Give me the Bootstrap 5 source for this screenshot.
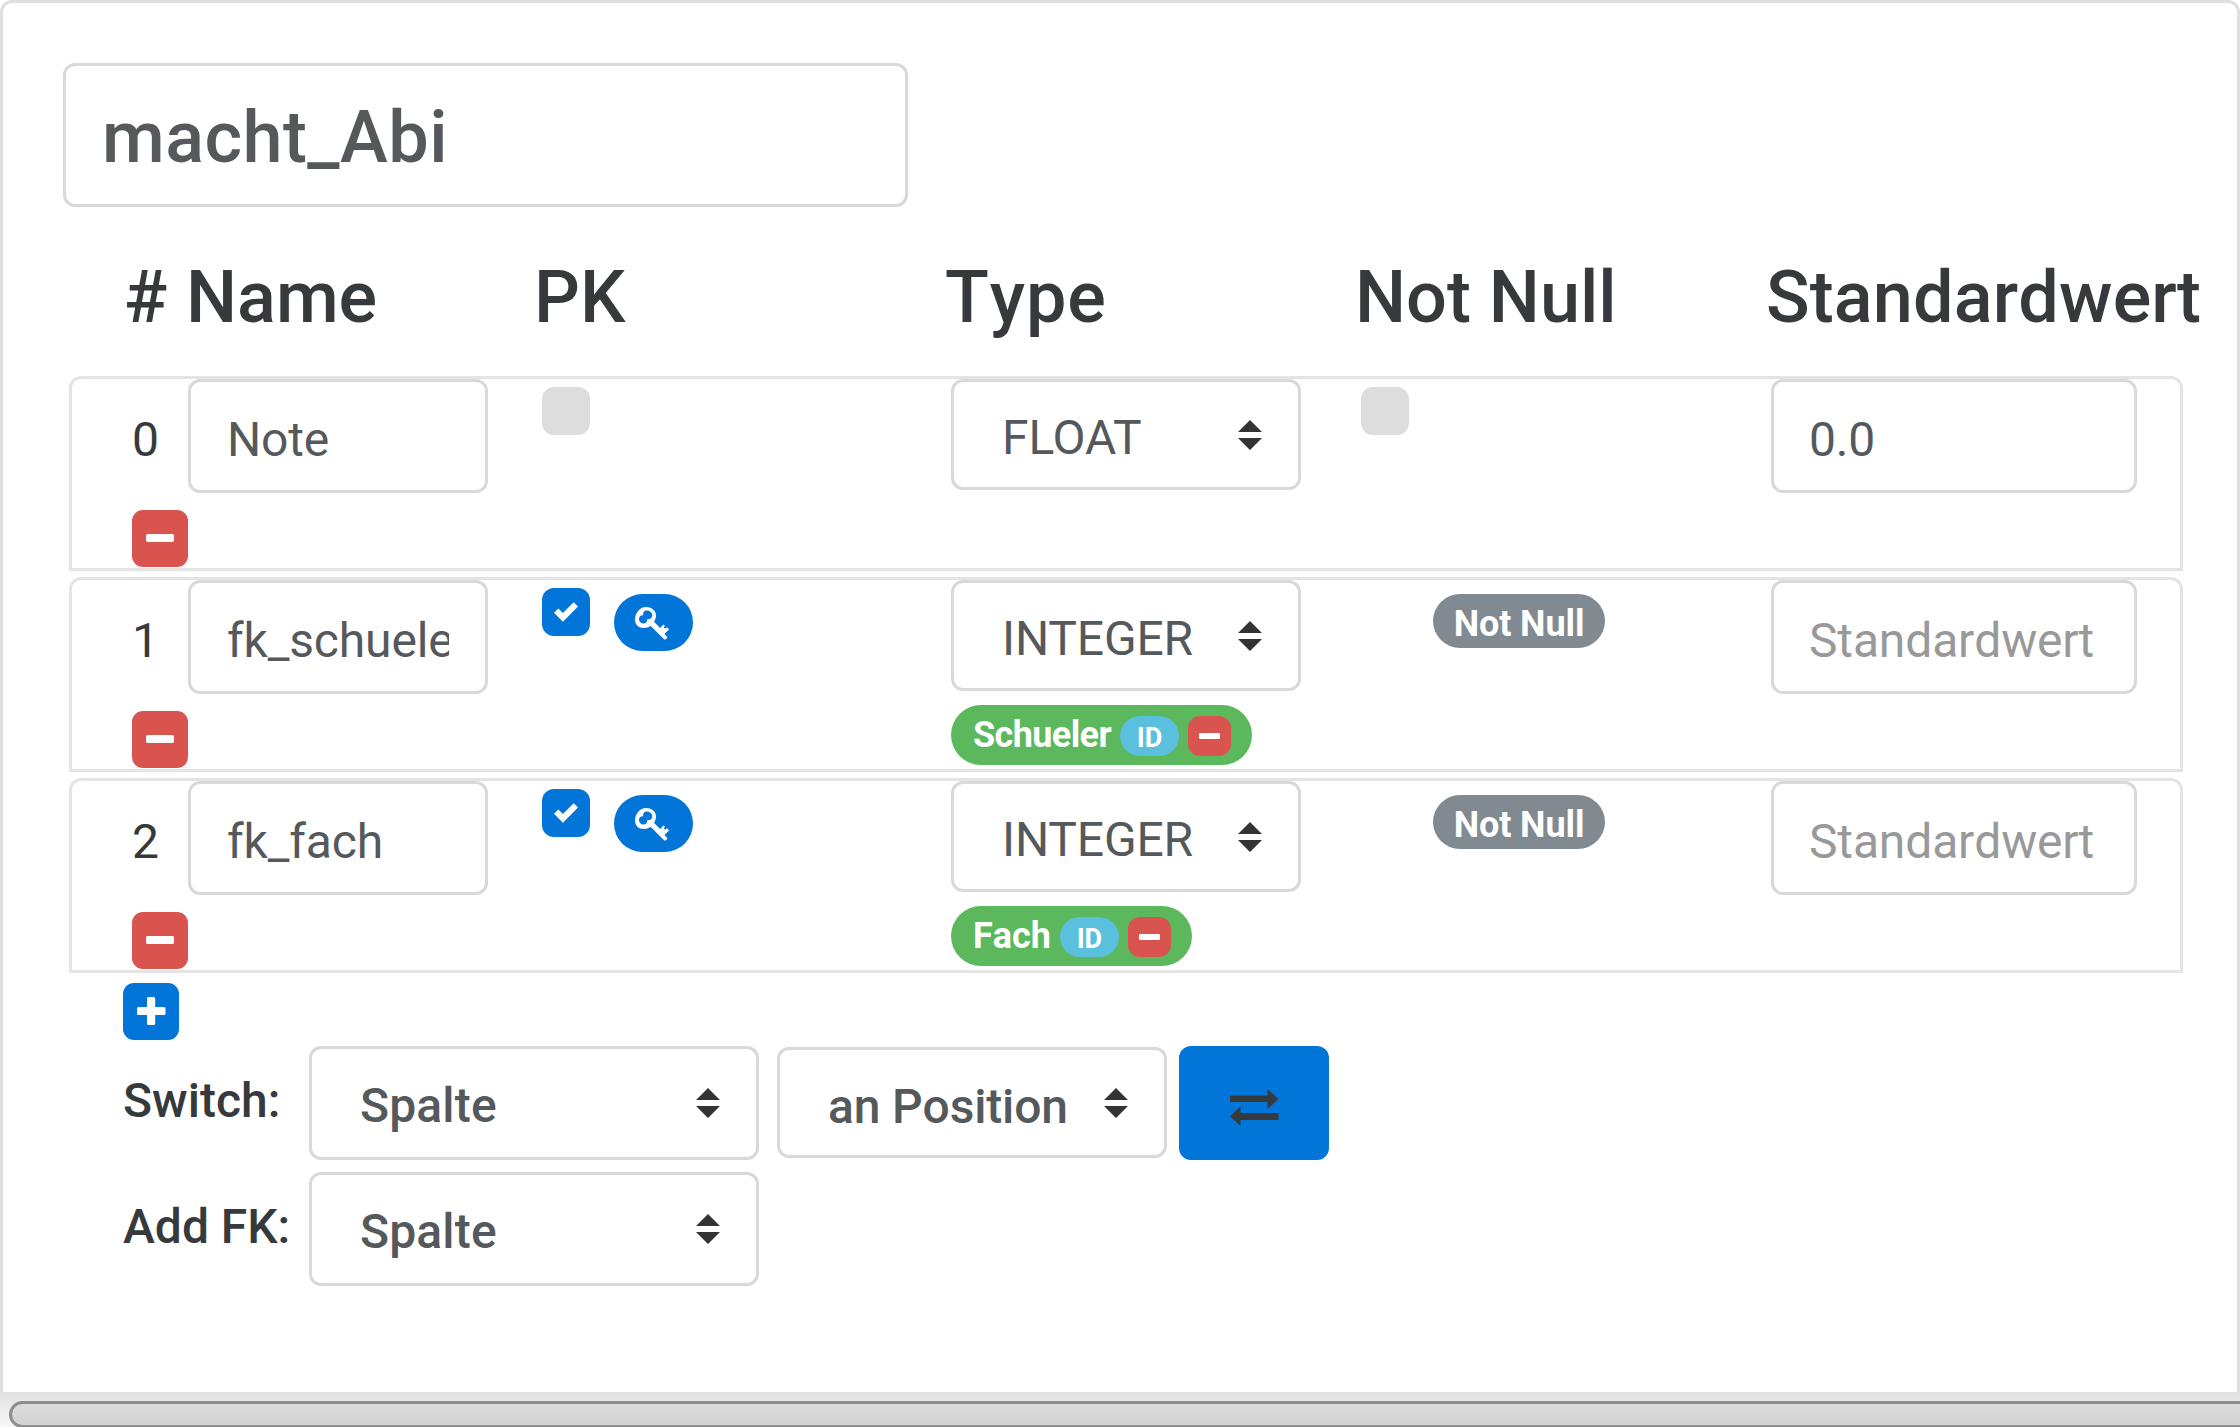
<!DOCTYPE html>
<html lang="de">
<head>
<meta charset="utf-8">
<meta name="viewport" content="width=device-width, initial-scale=1">
<title>macht_Abi</title>
<link rel="stylesheet" href="https://cdn.jsdelivr.net/npm/bootstrap@5.3.0/dist/css/bootstrap.min.css">
<style>
html{font-size:48px}
body{font-family:Roboto,sans-serif;font-kerning:none;color:#373a3c;background:#fff;height:1427px;overflow:hidden}
.editor{height:1392px;border:3px solid #dfdfdf;border-bottom:0;border-radius:12px 12px 0 0;padding:60px 0 0 60px}
.form-control,.form-select{border:3px solid #d9d9d9;border-radius:12px;color:#55595c;font-size:48px;line-height:72px;background-color:#fff;font-kerning:none}
.form-control{height:114px;padding:21px 36px 15px 35px;letter-spacing:-.15px}
.form-control::placeholder{color:#999}
.title-input{width:845px;height:144px;padding:29px 36px 25px;font-size:72px;font-weight:500;line-height:84px;letter-spacing:.45px}
.form-select{height:111px;padding:20px 60px 13px 48px;background-size:24px 30px;background-position:right 36px top 38px;
background-image:url("data:image/svg+xml,%3csvg xmlns='http://www.w3.org/2000/svg' viewBox='0 0 24 30'%3e%3cpath fill='%23333' d='M12 0 24 12H0zM0 18h24L12 30z'/%3e%3c/svg%3e")}
.heads{display:grid;grid-template-columns:62px 348px 411px 410px 411px 1fr;margin:51px 0 0 61px;font-size:72px;font-weight:500;line-height:80px;height:118px;white-space:nowrap}
.heads span:nth-child(4){letter-spacing:.9px}
.heads span:last-child{letter-spacing:.15px}
.line{display:grid;grid-template-columns:56px 354px 409px 410px 410px 366px;grid-template-rows:128px 61px;width:2114px;height:195px;margin:0 0 6px 6px;padding-left:60px;border:3px solid #e4e4e4;border-radius:12px 12px 0 0}
.num{padding:25px 0 0 0;line-height:72px}
.name-input{width:300px;padding-left:36px}
.type-select{width:350px;font-kerning:normal;letter-spacing:-.15px}
.box{width:48px;height:48px;border-radius:12px;background:#ddd;margin-top:8px}
.box.on{background:#0275d8;padding:12px}
.box svg,.sq svg,.keytag svg,.swap svg{display:block}
.sq{width:56px;height:57px;border-radius:11px;border:0;padding:13px 14px 15px}
.line>.sq{margin-top:3px}
.red{background:#d9534f}.blue{background:#0275d8}
.keytag{width:79px;height:57px;border-radius:29px;margin:14px 0 0 24px;padding:13px 0 0 21px;background:#0275d8}
.nn{width:172px;height:54px;border-radius:27px;margin:14px 0 0 72px;background:#818a91;font-size:36px;font-weight:700;line-height:60px;padding:0;letter-spacing:-.1px}
.fk{height:60px;border-radius:30px;background:#5cb85c;color:#fff;font-size:36px;font-weight:700;line-height:60px;margin-top:14px;padding:0 21px 0 22px;width:max-content}
.fk-long{letter-spacing:-.6px}
.idtag{width:59px;height:40px;border-radius:20px;background:#5bc0de;font-size:27px;line-height:44px;text-align:center;margin:1px 9px 0 9px;letter-spacing:0}
.mini{width:43px;height:40px;border-radius:12px;padding:17px 11px;margin-top:1px}
.mini svg{display:block}
.tools{padding:4px 0 0 60px}
.tools .form-select{font-weight:500}
.tag{width:186px;font-weight:500;line-height:72px;padding-top:19px;white-space:nowrap}
.tools .wide{width:450px;height:114px;padding-top:21px;padding-bottom:15px;background-position:right 36px top 39px;letter-spacing:.15px}
.pos{width:390px;margin:1px 12px 0 18px}
.tools .pos{padding-top:21px;letter-spacing:-.15px}
.swap{width:150px;height:114px;border:0;border-radius:12px;padding:9px 0 0 51px}
.track{height:35px;overflow:hidden;background:linear-gradient(#e1e1e1,#f8f8f8);padding:9px 0 0 9px}
.thumb{height:27px;margin-right:-30px;border:3px solid #8e8e8e;border-radius:14px;background:linear-gradient(#ddd,#d2d2d2)}
</style>
</head>
<body>
<svg class="d-none">
<symbol id="minus" viewBox="0 0 28 8"><rect width="28" height="8" rx="1.7" fill="#fff"/></symbol>
<symbol id="check" viewBox="0 0 8 8"><path fill="#fff" d="M6.564.75l-3.59 3.612-1.538-1.55L0 4.26 2.974 7.25 8 2.193z"/></symbol>
<symbol id="key" viewBox="0 0 34 33"><path fill="#fff" fill-rule="evenodd" d="M11 0C16 0 21 3 21 8.500c0 2.500-1 4.700-2 6.300l6.200 6.200 3-3.200c.6-.6 2.100.9 1.500 1.500l-1 1 1.500 1.500 1.200-1.200c.8-.7 3 1.500 2.300 2.200l-4.300 4.300 2.700 2.700c1 1-1.800 3.600-2.800 2.600L15.800 19C13.500 20.300 11.500 21 9 21 3.500 21 0 17.500 0 12.500 0 6 5 0 11 0zM11.500 3.500C9 3.500 7.700 5.600 8.200 8.200 5.500 8 3.700 10 4 12.600 4.200 15 6.500 17 9.200 16.500c2-.4 3.200-1.900 3-4.300 3 .3 5-1.300 5-4 0-2.800-2.500-4.700-5.700-4.700z"/></symbol>
</svg>
<main class="editor">
  <input class="form-control title-input" value="macht_Abi" aria-label="Tabelle">
  <div class="heads"><span>#</span><span>Name</span><span>PK</span><span>Type</span><span>Not Null</span><span>Standardwert</span></div>

  <div class="line">
    <div class="num">0</div>
    <div><input class="form-control name-input" value="Note"></div>
    <div><div class="box"></div></div>
    <div><select class="form-select type-select"><option>FLOAT</option></select></div>
    <div><div class="box"></div></div>
    <div><input class="form-control" value="0.0"></div>
    <button class="sq red"><svg width="28" height="28"><use href="#minus" width="28" height="8" y="10"/></svg></button>
  </div>

  <div class="line">
    <div class="num">1</div>
    <div><input class="form-control name-input" value="fk_schueler"></div>
    <div class="d-flex align-items-start"><div class="box on"><svg width="24" height="24"><use href="#check"/></svg></div><span class="keytag"><svg width="34" height="33"><use href="#key"/></svg></span></div>
    <div><select class="form-select type-select"><option>INTEGER</option></select>
      <div class="fk fk-long d-flex align-items-center"><span>Schueler</span><span class="idtag">ID</span><span class="mini red"><svg width="21" height="6"><use href="#minus"/></svg></span></div></div>
    <div><span class="badge nn d-block">Not Null</span></div>
    <div><input class="form-control" placeholder="Standardwert"></div>
    <button class="sq red"><svg width="28" height="28"><use href="#minus" width="28" height="8" y="10"/></svg></button>
  </div>

  <div class="line">
    <div class="num">2</div>
    <div><input class="form-control name-input" value="fk_fach"></div>
    <div class="d-flex align-items-start"><div class="box on"><svg width="24" height="24"><use href="#check"/></svg></div><span class="keytag"><svg width="34" height="33"><use href="#key"/></svg></span></div>
    <div><select class="form-select type-select"><option>INTEGER</option></select>
      <div class="fk d-flex align-items-center"><span>Fach</span><span class="idtag">ID</span><span class="mini red"><svg width="21" height="6"><use href="#minus"/></svg></span></div></div>
    <div><span class="badge nn d-block">Not Null</span></div>
    <div><input class="form-control" placeholder="Standardwert"></div>
    <button class="sq red"><svg width="28" height="28"><use href="#minus" width="28" height="8" y="10"/></svg></button>
  </div>

  <div class="tools">
    <button class="sq blue d-block"><svg width="29" height="28"><path fill="#fff" d="M12 0h4.500a1.700 1.700 0 0 1 1.700 1.700V10H27a1.500 1.500 0 0 1 1.500 1.500V16.500a1.500 1.500 0 0 1-1.500 1.500H18.200v8.500a1.500 1.500 0 0 1-1.500 1.500H11.500a1.500 1.500 0 0 1-1.500-1.500V18H1.500A1.500 1.500 0 0 1 0 16.500V11.500A1.500 1.500 0 0 1 1.500 10H10V1.500A1.500 1.500 0 0 1 11.500 0z"/></svg></button>
    <div class="d-flex align-items-start" style="margin-top:6px">
      <label class="tag">Switch:</label>
      <select class="form-select wide"><option>Spalte</option></select>
      <select class="form-select pos"><option>an Position</option></select>
      <button class="swap blue"><svg width="49" height="37"><path fill="#373a3c" d="M0 6.500h37.500V0L48.500 10 37.500 20V13H0zM48.500 31H10.500v6L0 27.300 10.500 17.500V24H48.500z"/></svg></button>
    </div>
    <div class="d-flex align-items-start" style="margin-top:12px">
      <label class="tag">Add FK:</label>
      <select class="form-select wide"><option>Spalte</option></select>
    </div>
  </div>
</main>
<div class="track"><div class="thumb"></div></div>
<script src="https://cdn.jsdelivr.net/npm/bootstrap@5.3.0/dist/js/bootstrap.bundle.min.js"></script>
</body>
</html>
